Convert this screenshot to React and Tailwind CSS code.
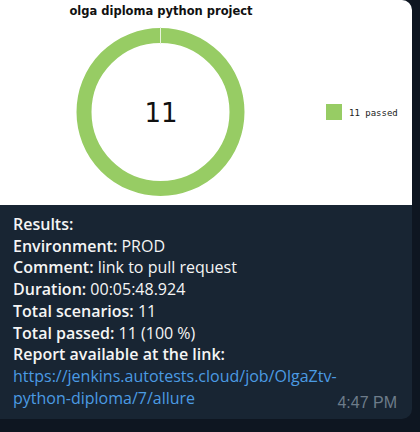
const rows = [
  { label: "Environment:", value: "PROD" },
  { label: "Comment:", value: "link to pull request" },
  { label: "Duration:", value: "00:05:48.924" },
  { label: "Total scenarios:", value: "11" },
  { label: "Total passed:", value: "11 (100 %)" },
];

function Chart() {
  return (
    <svg width="412" height="205" viewBox="0 0 412 205" className="block">
      <text
        x="161"
        y="15"
        textAnchor="middle"
        fontFamily="'DejaVu Sans', sans-serif"
        fontWeight="bold"
        fontSize="11.5"
        fill="#111"
      >
        olga diploma python project
      </text>
      <circle cx="160.5" cy="112" r="76.5" fill="none" stroke="#97cc64" strokeWidth="15" />
      <line x1="160.5" y1="27" x2="160.5" y2="44" stroke="#e8f3dc" strokeWidth="1" />
      <text
        x="161"
        y="122"
        textAnchor="middle"
        fontFamily="'DejaVu Sans', sans-serif"
        fontSize="26"
        fill="#111"
      >
        11
      </text>
      <rect x="326" y="104" width="16" height="16" fill="#97cc64" />
      <text x="349" y="116" fontFamily="'DejaVu Sans Mono', monospace" fontSize="9" fill="#222">
        11 passed
      </text>
    </svg>
  );
}

export default function App() {
  return (
    <div className="w-[420px] h-[432px] bg-[#0e1621] overflow-hidden">
      <div className="w-[412px] bg-[#182533] rounded-r-[10px] overflow-hidden">
        {/* Chart image */}
        <div className="h-[205px] bg-white rounded-tr-[6px] overflow-hidden">
          <Chart />
        </div>

        {/* Message text */}
        <div
          className="relative pl-[13px] pr-3 pt-[9px] pb-[10px] text-[16px] leading-[21.7px] text-[#f5f5f5]"
          style={{ fontFamily: "'Open Sans', sans-serif" }}
        >
          <p className="font-semibold">Results:</p>
          {rows.map((r) => (
            <p key={r.label}>
              <span className="font-semibold">{r.label}</span> {r.value}
            </p>
          ))}
          <p className="font-semibold">Report available at the link:</p>
          <p className="text-[#4b9be3]">
            https://jenkins.autotests.cloud/job/OlgaZtv-
            <br />
            python-diploma/7/allure
          </p>
          <span
            className="absolute right-[15px] bottom-[6px] text-[16px] leading-[20px] text-[#6d7c8a]"
            style={{ fontFamily: "'Liberation Sans', Arial, sans-serif" }}
          >
            4:47 PM
          </span>
        </div>
      </div>
    </div>
  );
}
